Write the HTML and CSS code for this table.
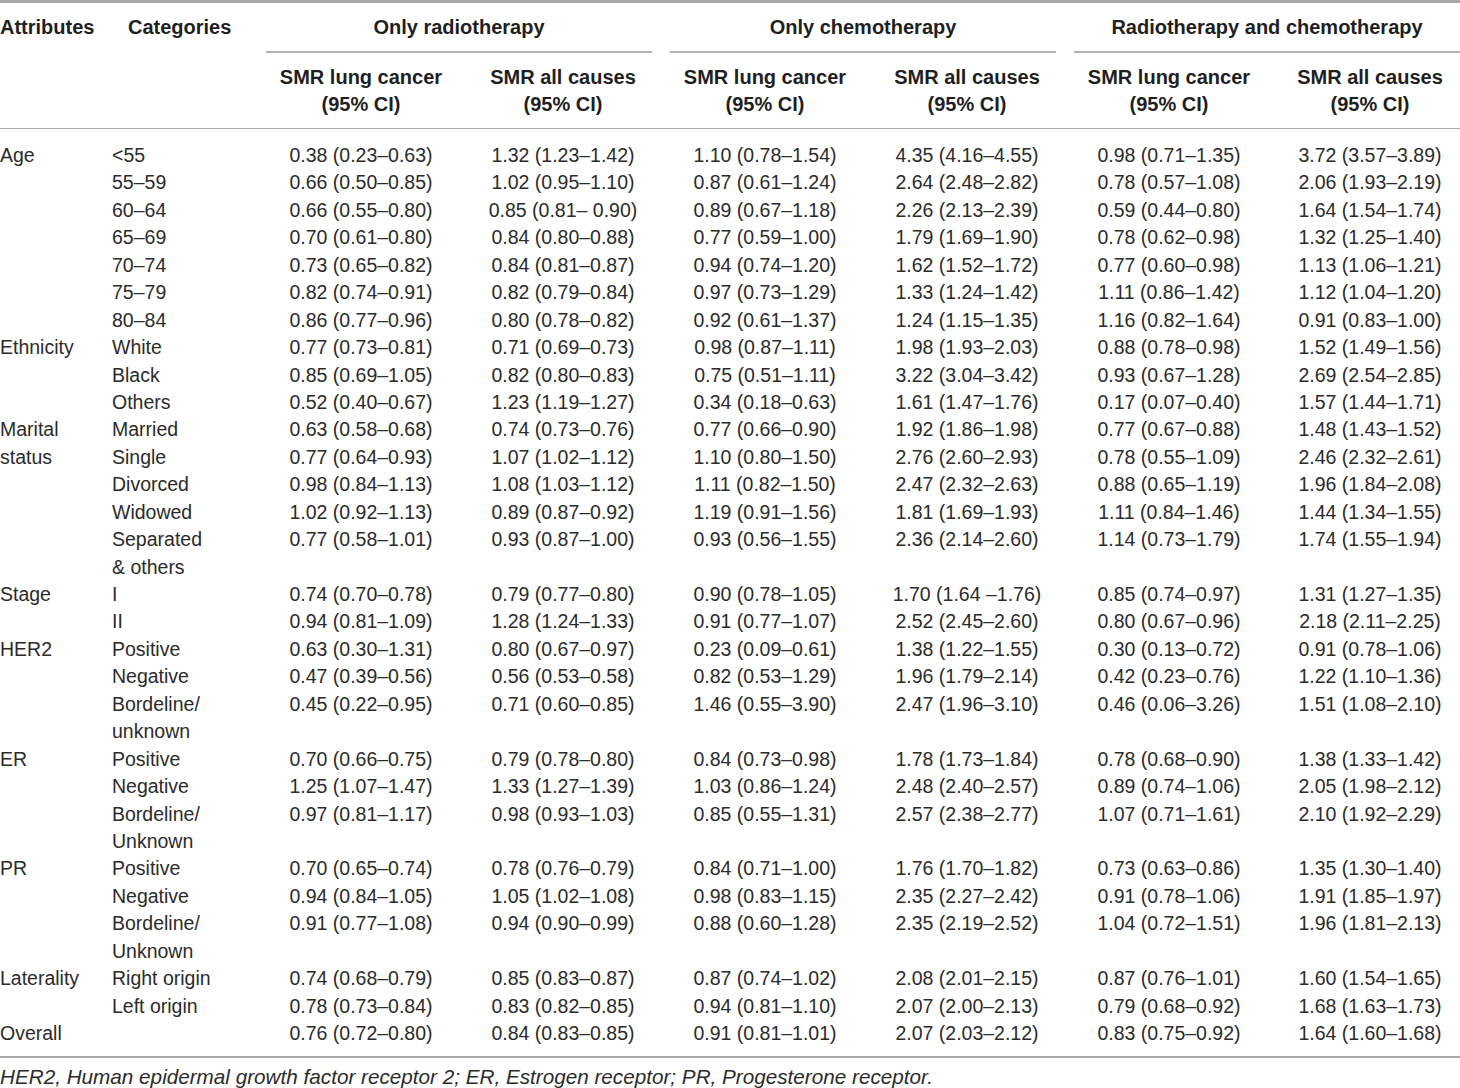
FILE: index.html
```html
<!DOCTYPE html>
<html lang="en">
<head>
<meta charset="utf-8">
<title>SMR table</title>
<link rel="stylesheet" href="styles.css">
</head>
<body>
<div class="page">
<table class="smr">
  <colgroup>
    <col class="c-attr"><col class="c-cat">
    <col class="c-data"><col class="c-data"><col class="c-data"><col class="c-data"><col class="c-data"><col class="c-last">
  </colgroup>
  <thead>
    <tr class="h1">
      <th class="attr" rowspan="2">Attributes</th>
      <th class="cat" rowspan="2">Categories</th>
      <th class="group" colspan="2"><div class="gline">Only radiotherapy</div></th>
      <th class="group" colspan="2"><div class="gline">Only chemotherapy</div></th>
      <th class="group last" colspan="2"><div class="gline">Radiotherapy and chemotherapy</div></th>
    </tr>
    <tr class="h2">
      <th>SMR lung cancer<br>(95% CI)</th>
      <th>SMR all causes<br>(95% CI)</th>
      <th>SMR lung cancer<br>(95% CI)</th>
      <th>SMR all causes<br>(95% CI)</th>
      <th>SMR lung cancer<br>(95% CI)</th>
      <th class="lastcol">SMR all causes<br>(95% CI)</th>
    </tr>
  </thead>
  <tbody>
    <tr class="first"><td class="attr" rowspan="7">Age</td><td class="cat">&lt;55</td><td>0.38 (0.23–0.63)</td><td>1.32 (1.23–1.42)</td><td>1.10 (0.78–1.54)</td><td>4.35 (4.16–4.55)</td><td>0.98 (0.71–1.35)</td><td class="lastcol">3.72 (3.57–3.89)</td></tr>
    <tr><td class="cat">55–59</td><td>0.66 (0.50–0.85)</td><td>1.02 (0.95–1.10)</td><td>0.87 (0.61–1.24)</td><td>2.64 (2.48–2.82)</td><td>0.78 (0.57–1.08)</td><td class="lastcol">2.06 (1.93–2.19)</td></tr>
    <tr><td class="cat">60–64</td><td>0.66 (0.55–0.80)</td><td>0.85 (0.81– 0.90)</td><td>0.89 (0.67–1.18)</td><td>2.26 (2.13–2.39)</td><td>0.59 (0.44–0.80)</td><td class="lastcol">1.64 (1.54–1.74)</td></tr>
    <tr><td class="cat">65–69</td><td>0.70 (0.61–0.80)</td><td>0.84 (0.80–0.88)</td><td>0.77 (0.59–1.00)</td><td>1.79 (1.69–1.90)</td><td>0.78 (0.62–0.98)</td><td class="lastcol">1.32 (1.25–1.40)</td></tr>
    <tr><td class="cat">70–74</td><td>0.73 (0.65–0.82)</td><td>0.84 (0.81–0.87)</td><td>0.94 (0.74–1.20)</td><td>1.62 (1.52–1.72)</td><td>0.77 (0.60–0.98)</td><td class="lastcol">1.13 (1.06–1.21)</td></tr>
    <tr><td class="cat">75–79</td><td>0.82 (0.74–0.91)</td><td>0.82 (0.79–0.84)</td><td>0.97 (0.73–1.29)</td><td>1.33 (1.24–1.42)</td><td>1.11 (0.86–1.42)</td><td class="lastcol">1.12 (1.04–1.20)</td></tr>
    <tr><td class="cat">80–84</td><td>0.86 (0.77–0.96)</td><td>0.80 (0.78–0.82)</td><td>0.92 (0.61–1.37)</td><td>1.24 (1.15–1.35)</td><td>1.16 (0.82–1.64)</td><td class="lastcol">0.91 (0.83–1.00)</td></tr>

    <tr><td class="attr" rowspan="3">Ethnicity</td><td class="cat">White</td><td>0.77 (0.73–0.81)</td><td>0.71 (0.69–0.73)</td><td>0.98 (0.87–1.11)</td><td>1.98 (1.93–2.03)</td><td>0.88 (0.78–0.98)</td><td class="lastcol">1.52 (1.49–1.56)</td></tr>
    <tr><td class="cat">Black</td><td>0.85 (0.69–1.05)</td><td>0.82 (0.80–0.83)</td><td>0.75 (0.51–1.11)</td><td>3.22 (3.04–3.42)</td><td>0.93 (0.67–1.28)</td><td class="lastcol">2.69 (2.54–2.85)</td></tr>
    <tr><td class="cat">Others</td><td>0.52 (0.40–0.67)</td><td>1.23 (1.19–1.27)</td><td>0.34 (0.18–0.63)</td><td>1.61 (1.47–1.76)</td><td>0.17 (0.07–0.40)</td><td class="lastcol">1.57 (1.44–1.71)</td></tr>

    <tr><td class="attr" rowspan="5">Marital<br>status</td><td class="cat">Married</td><td>0.63 (0.58–0.68)</td><td>0.74 (0.73–0.76)</td><td>0.77 (0.66–0.90)</td><td>1.92 (1.86–1.98)</td><td>0.77 (0.67–0.88)</td><td class="lastcol">1.48 (1.43–1.52)</td></tr>
    <tr><td class="cat">Single</td><td>0.77 (0.64–0.93)</td><td>1.07 (1.02–1.12)</td><td>1.10 (0.80–1.50)</td><td>2.76 (2.60–2.93)</td><td>0.78 (0.55–1.09)</td><td class="lastcol">2.46 (2.32–2.61)</td></tr>
    <tr><td class="cat">Divorced</td><td>0.98 (0.84–1.13)</td><td>1.08 (1.03–1.12)</td><td>1.11 (0.82–1.50)</td><td>2.47 (2.32–2.63)</td><td>0.88 (0.65–1.19)</td><td class="lastcol">1.96 (1.84–2.08)</td></tr>
    <tr><td class="cat">Widowed</td><td>1.02 (0.92–1.13)</td><td>0.89 (0.87–0.92)</td><td>1.19 (0.91–1.56)</td><td>1.81 (1.69–1.93)</td><td>1.11 (0.84–1.46)</td><td class="lastcol">1.44 (1.34–1.55)</td></tr>
    <tr><td class="cat">Separated<br>&amp; others</td><td>0.77 (0.58–1.01)</td><td>0.93 (0.87–1.00)</td><td>0.93 (0.56–1.55)</td><td>2.36 (2.14–2.60)</td><td>1.14 (0.73–1.79)</td><td class="lastcol">1.74 (1.55–1.94)</td></tr>

    <tr><td class="attr" rowspan="2">Stage</td><td class="cat">I</td><td>0.74 (0.70–0.78)</td><td>0.79 (0.77–0.80)</td><td>0.90 (0.78–1.05)</td><td>1.70 (1.64 –1.76)</td><td>0.85 (0.74–0.97)</td><td class="lastcol">1.31 (1.27–1.35)</td></tr>
    <tr><td class="cat">II</td><td>0.94 (0.81–1.09)</td><td>1.28 (1.24–1.33)</td><td>0.91 (0.77–1.07)</td><td>2.52 (2.45–2.60)</td><td>0.80 (0.67–0.96)</td><td class="lastcol">2.18 (2.11–2.25)</td></tr>

    <tr><td class="attr" rowspan="3">HER2</td><td class="cat">Positive</td><td>0.63 (0.30–1.31)</td><td>0.80 (0.67–0.97)</td><td>0.23 (0.09–0.61)</td><td>1.38 (1.22–1.55)</td><td>0.30 (0.13–0.72)</td><td class="lastcol">0.91 (0.78–1.06)</td></tr>
    <tr><td class="cat">Negative</td><td>0.47 (0.39–0.56)</td><td>0.56 (0.53–0.58)</td><td>0.82 (0.53–1.29)</td><td>1.96 (1.79–2.14)</td><td>0.42 (0.23–0.76)</td><td class="lastcol">1.22 (1.10–1.36)</td></tr>
    <tr><td class="cat">Bordeline/<br>unknown</td><td>0.45 (0.22–0.95)</td><td>0.71 (0.60–0.85)</td><td>1.46 (0.55–3.90)</td><td>2.47 (1.96–3.10)</td><td>0.46 (0.06–3.26)</td><td class="lastcol">1.51 (1.08–2.10)</td></tr>

    <tr><td class="attr" rowspan="3">ER</td><td class="cat">Positive</td><td>0.70 (0.66–0.75)</td><td>0.79 (0.78–0.80)</td><td>0.84 (0.73–0.98)</td><td>1.78 (1.73–1.84)</td><td>0.78 (0.68–0.90)</td><td class="lastcol">1.38 (1.33–1.42)</td></tr>
    <tr><td class="cat">Negative</td><td>1.25 (1.07–1.47)</td><td>1.33 (1.27–1.39)</td><td>1.03 (0.86–1.24)</td><td>2.48 (2.40–2.57)</td><td>0.89 (0.74–1.06)</td><td class="lastcol">2.05 (1.98–2.12)</td></tr>
    <tr><td class="cat">Bordeline/<br>Unknown</td><td>0.97 (0.81–1.17)</td><td>0.98 (0.93–1.03)</td><td>0.85 (0.55–1.31)</td><td>2.57 (2.38–2.77)</td><td>1.07 (0.71–1.61)</td><td class="lastcol">2.10 (1.92–2.29)</td></tr>

    <tr><td class="attr" rowspan="3">PR</td><td class="cat">Positive</td><td>0.70 (0.65–0.74)</td><td>0.78 (0.76–0.79)</td><td>0.84 (0.71–1.00)</td><td>1.76 (1.70–1.82)</td><td>0.73 (0.63–0.86)</td><td class="lastcol">1.35 (1.30–1.40)</td></tr>
    <tr><td class="cat">Negative</td><td>0.94 (0.84–1.05)</td><td>1.05 (1.02–1.08)</td><td>0.98 (0.83–1.15)</td><td>2.35 (2.27–2.42)</td><td>0.91 (0.78–1.06)</td><td class="lastcol">1.91 (1.85–1.97)</td></tr>
    <tr><td class="cat">Bordeline/<br>Unknown</td><td>0.91 (0.77–1.08)</td><td>0.94 (0.90–0.99)</td><td>0.88 (0.60–1.28)</td><td>2.35 (2.19–2.52)</td><td>1.04 (0.72–1.51)</td><td class="lastcol">1.96 (1.81–2.13)</td></tr>

    <tr><td class="attr" rowspan="2">Laterality</td><td class="cat">Right origin</td><td>0.74 (0.68–0.79)</td><td>0.85 (0.83–0.87)</td><td>0.87 (0.74–1.02)</td><td>2.08 (2.01–2.15)</td><td>0.87 (0.76–1.01)</td><td class="lastcol">1.60 (1.54–1.65)</td></tr>
    <tr><td class="cat">Left origin</td><td>0.78 (0.73–0.84)</td><td>0.83 (0.82–0.85)</td><td>0.94 (0.81–1.10)</td><td>2.07 (2.00–2.13)</td><td>0.79 (0.68–0.92)</td><td class="lastcol">1.68 (1.63–1.73)</td></tr>

    <tr class="final"><td class="attr">Overall</td><td class="cat"></td><td>0.76 (0.72–0.80)</td><td>0.84 (0.83–0.85)</td><td>0.91 (0.81–1.01)</td><td>2.07 (2.03–2.12)</td><td>0.83 (0.75–0.92)</td><td class="lastcol">1.64 (1.60–1.68)</td></tr>
  </tbody>
</table>
<p class="note">HER2, Human epidermal growth factor receptor 2; ER, Estrogen receptor; PR, Progesterone receptor.</p>
</div>
</body>
</html>
```

FILE: styles.css
```css
html, body {
  margin: 0;
  padding: 0;
  background: #ffffff;
}

body {
  font-family: "Liberation Sans", Arial, sans-serif;
  color: #2b2b2b;
  overflow: hidden;
}

.page {
  width: 1460px;
}

.smr {
  width: 1460px;
  table-layout: fixed;
  border-collapse: collapse;
  border-spacing: 0;
  font-size: 19.5px;
  border-top: 3px solid #a9a9a9;
  border-bottom: 2px solid #a9a9a9;
}

.c-attr { width: 112px; }
.c-cat { width: 148px; }
.c-data { width: 202px; }
.c-last { width: 190px; }

.smr th {
  font-weight: bold;
  font-size: 20px;
  color: #1f1f1f;
  text-align: center;
  vertical-align: top;
  padding: 0;
}

.h1 th {
  line-height: 24px;
  padding-top: 12px;
}

.h1 th.attr {
  text-align: left;
}

.h1 th.cat {
  text-align: left;
  padding-left: 16px;
}

.h1 th.attr,
.h1 th.cat {
  border-bottom: 1.5px solid #a9a9a9;
}

.h1 th.group {
  padding-left: 6px;
  padding-right: 12px;
}

.h1 th.group.last {
  padding-right: 0;
}

.gline {
  border-bottom: 2px solid #b3b3b3;
  padding-bottom: 12px;
}

.h2 th {
  line-height: 27px;
  padding-top: 11px;
  padding-bottom: 10px;
  border-bottom: 1.5px solid #a9a9a9;
}

.smr td {
  padding: 0;
  line-height: 27.44px;
  text-align: center;
  vertical-align: top;
  white-space: nowrap;
}

.smr td.attr,
.smr td.cat {
  text-align: left;
}

.smr .lastcol {
  padding-left: 10px;
}

.smr tr.first td {
  padding-top: 13px;
}

.smr tr.final td {
  padding-bottom: 9px;
}

.note {
  margin: 0;
  padding-top: 6px;
  font-size: 20.7px;
  line-height: 26px;
  font-style: italic;
  color: #2b2b2b;
}
```
